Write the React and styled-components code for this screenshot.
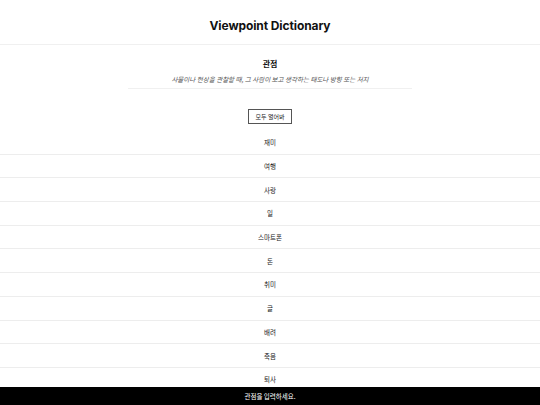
import React from "react";
import styled, { createGlobalStyle } from "styled-components";

const words = ["재미", "여행", "사랑", "일", "스마트폰", "돈", "취미", "글", "배려", "죽음", "퇴사"];

const GlobalStyle = createGlobalStyle`
    html, body {
        margin: 0;
        padding: 0;
        background: #fff;
        font-family: Inter, "Noto Sans CJK KR", sans-serif;
        color: #111;
    }
`

const Header = styled.header`
    height: 45px;
    border-bottom: 1px solid #f0f0f0;
    display: flex;
    align-items: center;
    justify-content: center;
    box-sizing: border-box;
    padding-top: 7px;

    h1 {
        margin: 0;
        font-size: 12px;
        font-weight: 700;
        letter-spacing: -0.1px;
    }
`

const WordInfo = styled.section`
    width: 284px;
    margin: 0 auto;
    text-align: center;
    border-bottom: 1px solid #f0f0f0;
    padding: 13px 0 4px;

    .word {
        margin: 0;
        font-family: "Noto Sans CJK KR", sans-serif;
        font-size: 8px;
        font-weight: 700;
        line-height: 12px;
    }

    .meaning {
        margin: 4px 0 0;
        font-family: "Noto Sans CJK KR", sans-serif;
        font-size: 6.5px;
        font-style: italic;
        color: #555;
        line-height: 10px;
    }
`

const ButtonBox = styled.div`
    display: flex;
    justify-content: center;
    padding: 20px 0 7px;
`

const OpenButton = styled.button`
    width: 44px;
    height: 15px;
    padding: 0;
    background: #fff;
    border: 1px solid #555;
    border-radius: 0;
    font-family: "Noto Sans CJK KR", sans-serif;
    font-size: 6px;
    color: #222;
`

const List = styled.ul`
    list-style: none;
    margin: 0;
    padding: 0 0 40px;
`

const Row = styled.li`
    height: 23.7px;
    box-sizing: border-box;
    border-bottom: 1px solid #ededed;
    display: flex;
    align-items: center;
    justify-content: center;
    font-family: "Noto Sans CJK KR", sans-serif;
    font-size: 6.5px;
    color: #222;
`

const Footer = styled.footer`
    position: fixed;
    left: 0;
    right: 0;
    bottom: 0;
    height: 18.5px;
    background: #000;
    color: #fff;
    display: flex;
    align-items: center;
    justify-content: center;
    font-family: "Noto Sans CJK KR", sans-serif;
    font-size: 6.5px;
`

const App = () => {
    return (
        <>
            <GlobalStyle />
            <Header>
                <h1>Viewpoint Dictionary</h1>
            </Header>
            <WordInfo>
                <p className="word">관점</p>
                <p className="meaning">사물이나 현상을 관찰할 때, 그 사람이 보고 생각하는 태도나 방향 또는 처지</p>
            </WordInfo>
            <ButtonBox>
                <OpenButton>모두 열어봐</OpenButton>
            </ButtonBox>
            <List>
                {words.map(w => (
                    <Row key={w}>{w}</Row>
                ))}
            </List>
            <Footer>관점을 입력하세요.</Footer>
        </>
    )
}

export default App
